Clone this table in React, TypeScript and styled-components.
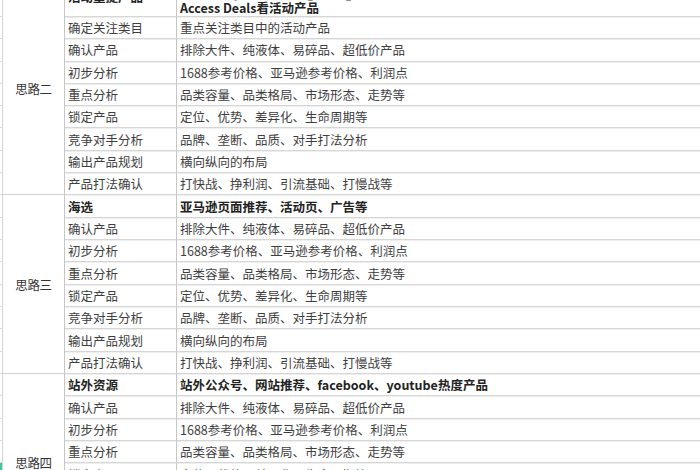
import React from "react";
import styled, { createGlobalStyle } from "styled-components";

const Global = createGlobalStyle`
  html, body { margin: 0; padding: 0; background: #ffffff; overflow: hidden; }
  #root { width: 700px; height: 470px; overflow: hidden; }
`;

type Row = { name: string; desc: string[]; bold?: boolean; selected?: boolean };
type Group = { label: string; rows: Row[] };

const common: Row[] = [
  { name: "确认产品", desc: ["排除大件、纯液体、易碎品、超低价产品"] },
  { name: "初步分析", desc: ["1688参考价格、亚马逊参考价格、利润点"] },
  { name: "重点分析", desc: ["品类容量、品类格局、市场形态、走势等"] },
  { name: "锁定产品", desc: ["定位、优势、差异化、生命周期等"] },
  { name: "竞争对手分析", desc: ["品牌、垄断、品质、对手打法分析"] },
  { name: "输出产品规划", desc: ["横向纵向的布局"] },
  { name: "产品打法确认", desc: ["打快战、挣利润、引流基础、打慢战等"] },
];

const groups: Group[] = [
  {
    label: "思路二",
    rows: [
      {
        name: "活动重提产品",
        bold: true,
        desc: [
          "通过Today's Deals、Lightning Deals、Best Deals等活动页面查看正在做活动的热卖产品，",
          "Access Deals看活动产品",
        ],
      },
      { name: "确定关注类目", desc: ["重点关注类目中的活动产品"] },
      ...common,
    ],
  },
  {
    label: "思路三",
    rows: [
      { name: "海选", bold: true, desc: ["亚马逊页面推荐、活动页、广告等"] },
      ...common,
    ],
  },
  {
    label: "思路四",
    rows: [
      {
        name: "站外资源",
        bold: true,
        desc: ["站外公众号、网站推荐、facebook、youtube热度产品"],
      },
      common[0],
      common[1],
      common[2],
      { ...common[3], selected: true },
      common[4],
      common[5],
      common[6],
    ],
  },
];

const Sheet = styled.div`
  display: grid;
  grid-template-columns: 3px 62px 112px 1fr;
  grid-template-rows: 39.35px;
  grid-auto-rows: 22.33px;
  margin-top: -22.5px;
  width: 700px;
  font-family: "Noto Sans CJK SC", "Noto Sans", sans-serif;
  font-size: 12.5px;
  color: #3e3e3e;
`;

const RowHead = styled.div<{ $selected?: boolean }>`
  grid-column: 1;
  box-sizing: border-box;
  border-right: 1px solid #d4d4d4;
  border-bottom: 1px solid #dadada;
  background: ${(p) => (p.$selected ? "#48c49c" : "#ffffff")};
`;

const GroupCell = styled.div<{ $span: number; $shift: number }>`
  grid-column: 2;
  grid-row: span ${(p) => p.$span};
  box-sizing: border-box;
  border-right: 1px solid #c6c6c6;
  border-bottom: 1px solid #cfcfcf;
  display: flex;
  align-items: center;
  justify-content: center;
  padding-top: ${(p) => p.$shift}px;
  color: #333333;
  letter-spacing: -0.3px;
`;

const NameCell = styled.div<{ $bold?: boolean }>`
  grid-column: 3;
  box-sizing: border-box;
  border-right: 1px solid #c6c6c6;
  border-bottom: 1px solid #d6d6d6;
  box-shadow: 0 1px 0 #efefef;
  display: flex;
  align-items: center;
  padding-left: 3px;
  white-space: nowrap;
  overflow: hidden;
  font-weight: ${(p) => (p.$bold ? 700 : 400)};
  color: ${(p) => (p.$bold ? "#222222" : "#3e3e3e")};
`;

const DescCell = styled.div<{ $bold?: boolean; $multi: boolean }>`
  grid-column: 4;
  box-sizing: border-box;
  border-bottom: 1px solid #d6d6d6;
  box-shadow: 0 1px 0 #efefef;
  display: flex;
  flex-direction: column;
  justify-content: ${(p) => (p.$multi ? "flex-end" : "center")};
  padding-left: 3px;
  padding-bottom: ${(p) => (p.$multi ? "1px" : "0")};
  white-space: nowrap;
  overflow: hidden;
  font-weight: ${(p) => (p.$bold ? 700 : 400)};
  color: ${(p) => (p.$bold ? "#222222" : "#3e3e3e")};
`;

const DescLine = styled.span<{ $multi: boolean; $last: boolean }>`
  display: block;
  line-height: ${(p) => (p.$multi ? "15px" : "normal")};
  font-weight: ${(p) => (p.$multi && !p.$last ? 400 : "inherit")};
  color: ${(p) => (p.$multi && !p.$last ? "#8a8a8a" : "inherit")};
`;

export default function App() {
  return (
    <>
      <Global />
      <Sheet>
        {groups.map((g, gi) => (
          <React.Fragment key={g.label}>
            {g.rows.map((r, ri) => {
              const multi = r.desc.length > 1;
              return (
                <React.Fragment key={gi + "-" + ri}>
                  <RowHead $selected={r.selected} />
                  {ri === 0 && (
                    <GroupCell $span={g.rows.length} $shift={gi === 0 ? 5 : 0}>
                      {g.label}
                    </GroupCell>
                  )}
                  <NameCell $bold={r.bold}>{r.name}</NameCell>
                  <DescCell $bold={r.bold} $multi={multi}>
                    {r.desc.map((d, di) => (
                      <DescLine
                        key={di}
                        $multi={multi}
                        $last={di === r.desc.length - 1}
                      >
                        {d}
                      </DescLine>
                    ))}
                  </DescCell>
                </React.Fragment>
              );
            })}
          </React.Fragment>
        ))}
      </Sheet>
    </>
  );
}
